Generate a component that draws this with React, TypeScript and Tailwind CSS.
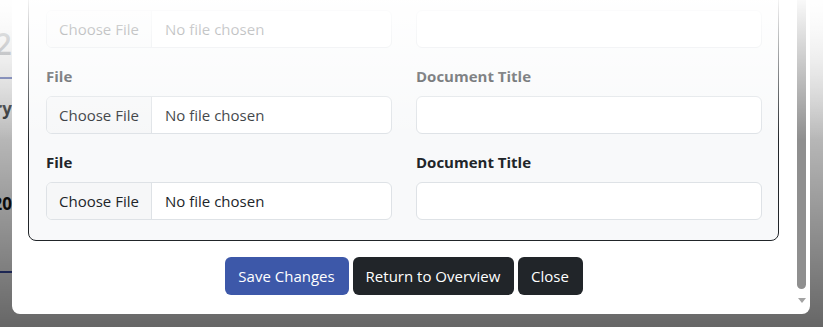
import React from 'react';

const FONT = { fontFamily: '"Open Sans", "Noto Sans", sans-serif' };

// one row of the documents form: file picker + title
const DocRow = () => (
  <>
    <div className="flex flex-col">
      <label className="mb-2 h-6 leading-6 text-[15px] font-bold text-[#212529]">File</label>
      <div className="flex h-[38px] items-center overflow-hidden rounded-md border border-[#dee2e6] bg-white text-[15px] text-[#212529]">
        <span className="flex h-full w-[105px] shrink-0 items-center border-r border-[#dee2e6] bg-[#f6f7f8] pl-3">Choose File</span>
        <span className="pl-[13px]">No file chosen</span>
      </div>
    </div>
    <div className="flex flex-col">
      <label className="mb-2 h-6 leading-6 text-[15px] font-bold text-[#212529]">Document Title</label>
      <div className="h-[38px] rounded-md border border-[#dee2e6] bg-white" />
    </div>
  </>
);

export default function App() {
  return (
    <div className="relative h-[327px] w-[823px] overflow-hidden bg-white" style={FONT}>
      {/* page behind the modal */}
      <div className="absolute left-[-188px] top-0 flex w-[200px] flex-col items-end">
        <div className="mt-[26px] h-[36px] text-[30px] font-semibold leading-[36px] text-[#8a8f95]">2</div>
        <div className="mt-[15px] h-[2px] w-full bg-[#3b4fa8]" />
        <div className="mt-[18px] text-[17px] font-bold leading-6 text-[#212529]">Summary</div>
        <div className="mt-[71px] text-[17px] font-bold leading-6 text-[#111]">Due 20</div>
        <div className="mt-[55px] h-[2px] w-full bg-[#3b4fa8]" />
      </div>
      <div className="absolute inset-0 bg-linear-to-b from-black/5 to-black/60" />

      {/* modal */}
      <div className="absolute left-[12px] top-0 flex h-[314px] w-[798px] overflow-hidden rounded-b-lg bg-white">
        <div className="flex flex-1 flex-col justify-end px-4 pb-[19px]">
          <div className="rounded-lg border border-[#212529] bg-[#f8f9fa] pb-5 pl-[17px] pr-4 pt-4">
            <div className="grid grid-cols-2 gap-x-6 gap-y-4">
              <DocRow />
              <DocRow />
              <DocRow />
            </div>
          </div>
          <div className="mt-4 flex justify-center gap-1 text-[15px] text-white">
            <button className="h-[38px] w-[124px] rounded-md bg-[#3d58a9]">Save Changes</button>
            <button className="h-[38px] w-[161px] rounded-md bg-[#212529]">Return to Overview</button>
            <button className="h-[38px] w-[65px] rounded-md bg-[#212529]">Close</button>
          </div>
        </div>
        {/* scrollbar */}
        <div className="relative w-[15px] shrink-0">
          <div className="absolute left-[2px] top-[-10px] h-[299px] w-[9px] rounded-full bg-[#8f8f8f]" />
          <svg className="absolute left-[3px] top-[298px]" width="8" height="5" viewBox="0 0 8 5">
            <path d="M0 0 H8 L4 5 Z" fill="#a3a3a3" />
          </svg>
        </div>
      </div>

      {/* fade at top of the capture */}
      <div className="pointer-events-none absolute inset-x-0 top-0 h-[140px] bg-linear-to-b from-white/95 to-white/0" />
    </div>
  );
}
